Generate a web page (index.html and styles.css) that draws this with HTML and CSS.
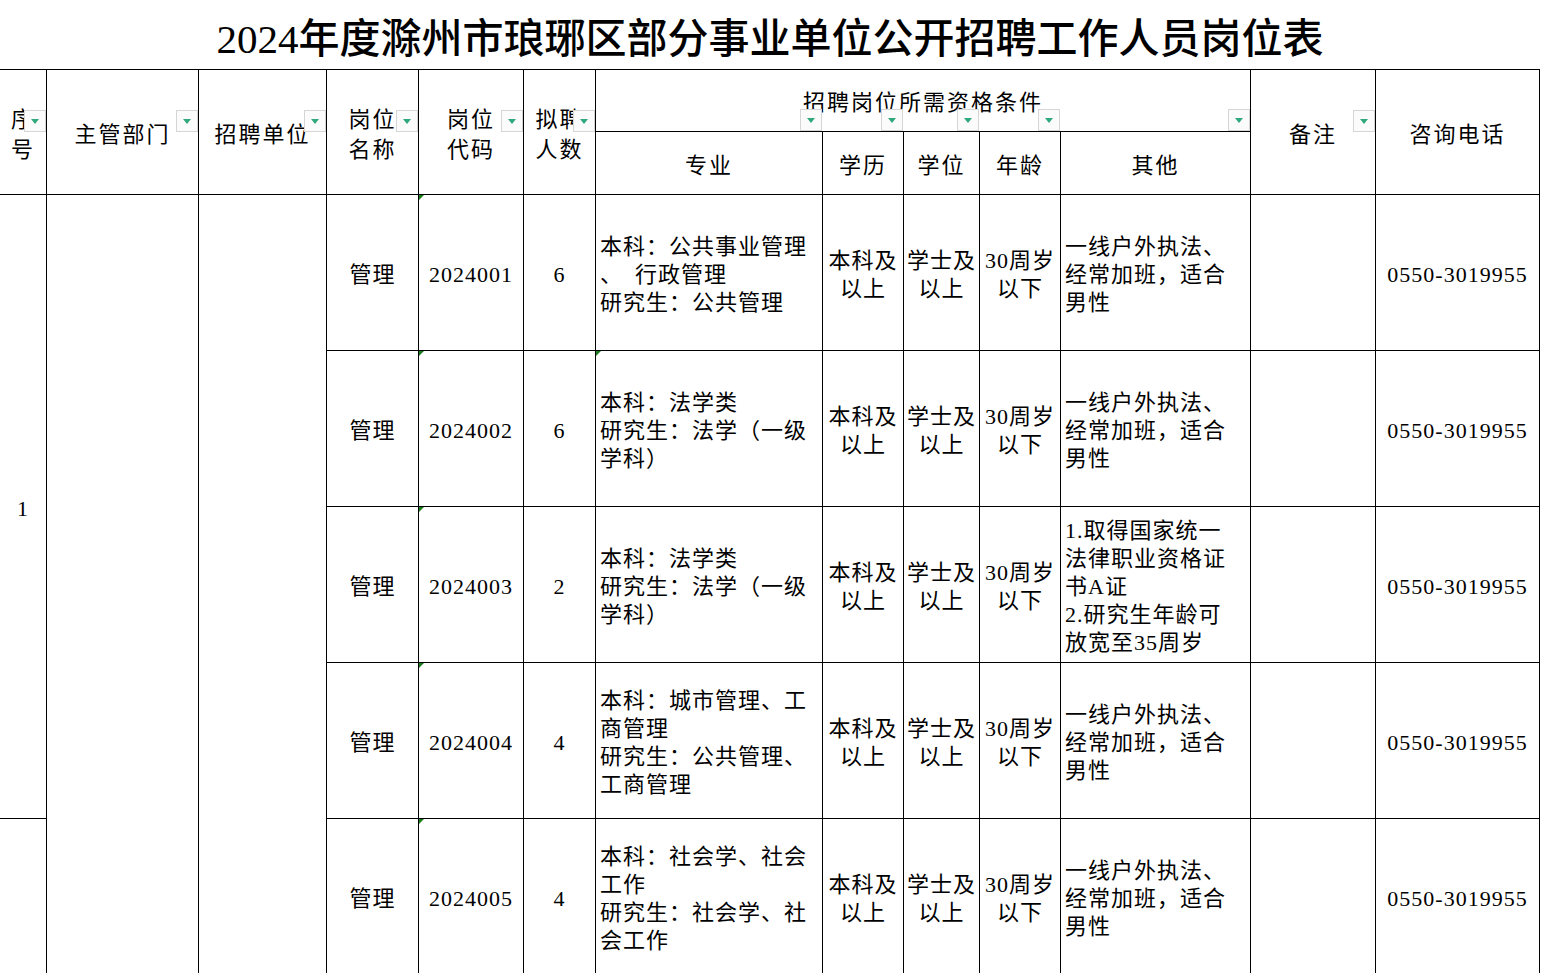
FILE: index.html
```html
<!DOCTYPE html>
<html lang="zh-CN">
<head>
<meta charset="utf-8">
<title>2024年度滁州市琅琊区部分事业单位公开招聘工作人员岗位表</title>
<link rel="stylesheet" href="styles.css">
</head>
<body>
<div class="sheet">
  <div class="title">2024年度滁州市琅琊区部分事业单位公开招聘工作人员岗位表</div>

  <div class="c h hr">序<br>号<span class="flt"></span></div>
  <div class="c h hr">主管部门<span class="flt"></span></div>
  <div class="c h hr">招聘单位<span class="flt"></span></div>
  <div class="c h hr">岗位<br>名称<span class="flt"></span></div>
  <div class="c h hr">岗位<br>代码<span class="flt"></span></div>
  <div class="c h hr">拟聘<br>人数<span class="flt"></span></div>
  <div class="c h grp"><span class="grp-t">招聘岗位所需资格条件</span></div>
  <div class="c h hr">备注<span class="flt"></span></div>
  <div class="c h hr">咨询电话</div>

  <div class="c h sub">专业<span class="flt up"></span></div>
  <div class="c h sub">学历<span class="flt up"></span></div>
  <div class="c h sub">学位<span class="flt up"></span></div>
  <div class="c h sub">年龄<span class="flt up"></span></div>
  <div class="c h sub">其他<span class="flt up"></span></div>

  <!-- row 1 -->
  <div class="c span4">1</div>
  <div class="c span5"></div>
  <div class="c span5"></div>
  <div class="c">管理</div>
  <div class="c mk">2024001</div>
  <div class="c">6</div>
  <div class="c l">本科：公共事业管理<br>、&ensp;行政管理<br>研究生：公共管理</div>
  <div class="c">本科及<br>以上</div>
  <div class="c">学士及<br>以上</div>
  <div class="c">30周岁<br>以下</div>
  <div class="c l">一线户外执法、<br>经常加班，适合<br>男性</div>
  <div class="c"></div>
  <div class="c">0550-3019955</div>

  <!-- row 2 -->
  <div class="c">管理</div>
  <div class="c mk">2024002</div>
  <div class="c">6</div>
  <div class="c l mk">本科：法学类<br>研究生：法学（一级<br>学科）</div>
  <div class="c">本科及<br>以上</div>
  <div class="c">学士及<br>以上</div>
  <div class="c">30周岁<br>以下</div>
  <div class="c l">一线户外执法、<br>经常加班，适合<br>男性</div>
  <div class="c"></div>
  <div class="c">0550-3019955</div>

  <!-- row 3 -->
  <div class="c">管理</div>
  <div class="c mk">2024003</div>
  <div class="c">2</div>
  <div class="c l">本科：法学类<br>研究生：法学（一级<br>学科）</div>
  <div class="c">本科及<br>以上</div>
  <div class="c">学士及<br>以上</div>
  <div class="c">30周岁<br>以下</div>
  <div class="c l">1.取得国家统一<br>法律职业资格证<br>书A证<br>2.研究生年龄可<br>放宽至35周岁</div>
  <div class="c"></div>
  <div class="c">0550-3019955</div>

  <!-- row 4 -->
  <div class="c">管理</div>
  <div class="c mk">2024004</div>
  <div class="c">4</div>
  <div class="c l">本科：城市管理、工<br>商管理<br>研究生：公共管理、<br>工商管理</div>
  <div class="c">本科及<br>以上</div>
  <div class="c">学士及<br>以上</div>
  <div class="c">30周岁<br>以下</div>
  <div class="c l">一线户外执法、<br>经常加班，适合<br>男性</div>
  <div class="c"></div>
  <div class="c">0550-3019955</div>

  <!-- row 5 -->
  <div class="c"></div>
  <div class="c">管理</div>
  <div class="c mk">2024005</div>
  <div class="c">4</div>
  <div class="c l">本科：社会学、社会<br>工作<br>研究生：社会学、社<br>会工作</div>
  <div class="c">本科及<br>以上</div>
  <div class="c">学士及<br>以上</div>
  <div class="c">30周岁<br>以下</div>
  <div class="c l">一线户外执法、<br>经常加班，适合<br>男性</div>
  <div class="c"></div>
  <div class="c">0550-3019955</div>
</div>
</body>
</html>
```

FILE: styles.css
```css
html, body {
  margin: 0;
  padding: 0;
  background: #ffffff;
}

body {
  width: 1542px;
  height: 973px;
  overflow: hidden;
  font-family: "Liberation Serif", "Noto Sans CJK SC", serif;
  color: #000000;
}

.sheet {
  display: grid;
  grid-template-columns: 47px 152px 128px 92px 105px 72px 227px 81px 76px 81px 190px 125px 164px;
  grid-template-rows: 70px 62px 63px 156px 156px 156px 156px 156px;
  width: 1540px;
}

.title {
  grid-column: 1 / -1;
  border-bottom: 1px solid #000;
  display: flex;
  align-items: center;
  justify-content: center;
  box-sizing: border-box;
  font-size: 41px;
  font-weight: 500;
  letter-spacing: 0;
  white-space: nowrap;
}

.c {
  position: relative;
  box-sizing: border-box;
  border-right: 1px solid #000;
  border-bottom: 1px solid #000;
  padding-top: 5px;
  display: flex;
  align-items: center;
  justify-content: center;
  text-align: center;
  white-space: nowrap;
  font-size: 22px;
  line-height: 28px;
  letter-spacing: 1px;
}

.c.l {
  justify-content: flex-start;
  text-align: left;
  padding-left: 4px;
}

.h {
  line-height: 30px;
  letter-spacing: 2px;
  padding-top: 6px;
}

.hr {
  grid-row: span 2;
}

.grp {
  grid-column: span 5;
  padding-top: 4px;
}

.span4 {
  grid-row: span 4;
}

.span5 {
  grid-row: span 5;
}

/* autofilter dropdown button */
.flt {
  position: absolute;
  right: 0;
  top: 40px;
  width: 22px;
  height: 22px;
  box-sizing: border-box;
  border: 1px solid #d6d6d6;
  background: #fbfbfb;
}

.flt.up {
  top: auto;
  bottom: calc(100% + 1px);
}

.flt::after {
  content: "";
  position: absolute;
  left: 6px;
  top: 8px;
  border-left: 4px solid transparent;
  border-right: 4px solid transparent;
  border-top: 5px solid #2fa97c;
}

/* green "number stored as text" indicator */
.mk::before {
  content: "";
  position: absolute;
  left: 0;
  top: 0;
  border-top: 5px solid #1d7d1d;
  border-right: 5px solid transparent;
}
```
